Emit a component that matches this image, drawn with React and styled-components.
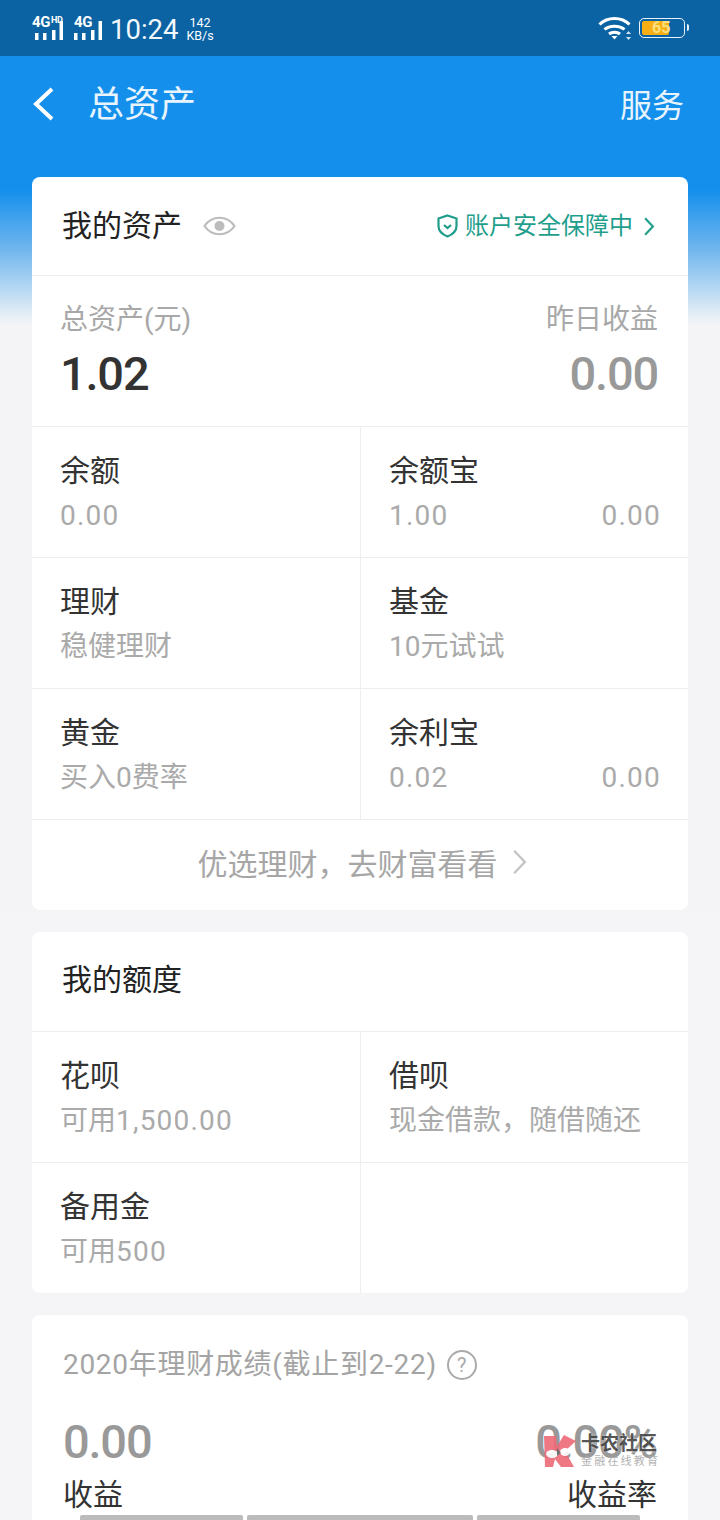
import React from "react";
import styled, { createGlobalStyle } from "styled-components";

const GlobalStyle = createGlobalStyle`
  html, body {
    margin: 0;
    padding: 0;
    background: #f5f5f8;
  }
  * {
    box-sizing: border-box;
  }
`;

const Page = styled.div`
  position: relative;
  width: 720px;
  height: 1520px;
  overflow: hidden;
  font-family: "Roboto", "Noto Sans CJK SC", sans-serif;
  background: linear-gradient(
    #1490ec 0,
    #1490ec 190px,
    #72b6ee 250px,
    #b8d9f3 290px,
    #e4eef6 315px,
    #f4f4f6 326px,
    #f5f5f8 100%
  );
`;

const StatusBar = styled.div`
  height: 56px;
  background: #0b63a3;
  color: #fff;
  display: flex;
  align-items: center;
  justify-content: space-between;
  padding: 0 32px;
`;

const StatusGroup = styled.div`
  display: flex;
  align-items: center;
`;

const SignalWrap = styled.div`
  width: ${(p) => p.$w}px;
  height: 24px;
  margin-right: ${(p) => p.$mr}px;
  margin-top: -1px;
`;

const SignalText = styled.div`
  font-size: 15px;
  line-height: 12px;
  font-weight: 700;
  white-space: nowrap;
  letter-spacing: -0.4px;

  sup {
    font-size: 9px;
    line-height: 8px;
    vertical-align: 4px;
    margin-left: 1px;
  }
`;

const SignalBars = styled.svg`
  display: block;
  margin-top: -7px;
`;

const Clock = styled.div`
  font-size: 27.5px;
  line-height: 30px;
  margin-right: 8px;
  margin-top: 3px;
  color: #f2f8fc;
`;

const Speed = styled.div`
  font-size: 12.5px;
  line-height: 13px;
  margin-top: 2px;
  text-align: center;
`;

const Battery = styled.div`
  position: relative;
  width: 46px;
  height: 20px;
  margin-left: 8px;
  margin-right: 3px;
  border: 1.5px solid #e8f2fa;
  border-radius: 5px;
  padding: 2px;

  &::after {
    content: "";
    position: absolute;
    right: -5px;
    top: 5px;
    width: 2px;
    height: 7px;
    background: #e8f2fa;
    border-radius: 0 2px 2px 0;
  }
`;

const BatteryFill = styled.div`
  width: 27px;
  height: 100%;
  background: #f9ae14;
  border-radius: 2px;
`;

const BatteryText = styled.span`
  position: absolute;
  left: 12px;
  top: 0;
  font-size: 16px;
  line-height: 17px;
  font-weight: 700;
  color: #f8e07e;
`;

const NavBar = styled.div`
  height: 121px;
  padding: 26px 36px 0 32px;
  display: flex;
  align-items: flex-start;
  color: #e8f4fd;
`;

const BackIcon = styled.svg`
  width: 24px;
  height: 34px;
  margin-top: 5px;
  margin-right: 32px;
`;

const NavTitle = styled.div`
  flex: 1;
  font-size: 36px;
  line-height: 46px;
`;

const NavAction = styled.div`
  font-size: 32px;
  line-height: 50px;
  margin-top: -1px;
`;

const Cards = styled.div`
  display: flex;
  flex-direction: column;
  gap: 22px;
  padding: 0 32px;
`;

const Card = styled.div`
  background: #fff;
  border-radius: 8px;
`;

const CardHead = styled.div`
  height: ${(p) => p.$h}px;
  padding: 0 33px ${(p) => p.$pb || 0}px 30px;
  display: flex;
  align-items: center;
  border-bottom: 1px solid #eeeeee;
`;

const CardTitle = styled.div`
  font-size: 30px;
  line-height: 40px;
  color: #222;
  margin-right: 21px;
`;

const SafeLink = styled.div`
  margin-left: auto;
  display: flex;
  align-items: center;
  color: #1f9e8c;
  font-size: 24px;
  line-height: 32px;
`;

const SafeIcon = styled.svg`
  width: 21px;
  height: 24px;
  margin-right: 7px;
`;

const Chevron = styled.svg`
  width: ${(p) => p.$w}px;
  height: ${(p) => p.$h}px;
  margin-left: ${(p) => p.$ml}px;
`;

const TotalRow = styled.div`
  height: 151px;
  padding: 26px 30px 0 28px;
  display: flex;
  justify-content: space-between;
  border-bottom: 1px solid #eeeeee;
`;

const TotalCol = styled.div`
  display: flex;
  flex-direction: column;
  align-items: ${(p) => (p.$right ? "flex-end" : "flex-start")};
`;

const MutedLabel = styled.div`
  font-size: 28px;
  line-height: 36px;
  color: #a8a8a8;
`;

const BigValue = styled.div`
  font-size: 47px;
  line-height: 60px;
  margin-top: 6px;
  font-weight: 500;
  letter-spacing: -1.2px;
  color: ${(p) => (p.$muted ? "#999999" : "#333333")};
`;

const Grid = styled.div`
  display: grid;
  grid-template-columns: 329px 327px;
  grid-auto-rows: 131px;
`;

const QuotaGrid = styled(Grid)`
  grid-template-rows: 131px 130px;
`;

const Cell = styled.div`
  padding: 24px 27px 0 28px;
  border-right: ${(p) => (p.$left ? "1px solid #eeeeee" : "none")};
  border-bottom: ${(p) => (p.$last ? "none" : "1px solid #eeeeee")};
`;

const CellTitle = styled.div`
  font-size: 30px;
  line-height: 40px;
  color: #333;
`;

const CellSub = styled.div`
  display: flex;
  justify-content: space-between;
  margin-top: 5px;
  font-size: 28px;
  line-height: 40px;
  color: #aaaaaa;
  white-space: nowrap;
`;

const Digits = styled.span`
  letter-spacing: 1.2px;
`;

const MoreLink = styled.div`
  height: 90px;
  padding: 0 0 6px 4px;
  display: flex;
  align-items: center;
  justify-content: center;
  font-size: 30px;
  color: #a6a6a6;
`;

const ScoreCard = styled(Card)`
  height: 260px;
  padding: 29px 31px 0 31px;
`;

const ScoreTitle = styled.div`
  display: flex;
  align-items: center;
  font-size: 28px;
  line-height: 42px;
  letter-spacing: 0.7px;
  color: #a4a4a4;
`;

const HelpIcon = styled.span`
  width: 30px;
  height: 30px;
  margin-left: 10px;
  border: 2px solid #aaaaaa;
  border-radius: 50%;
  font-size: 20px;
  line-height: 26px;
  text-align: center;
  letter-spacing: 0;
  color: #aaaaaa;
`;

const ScoreRow = styled.div`
  display: flex;
  justify-content: space-between;
  margin-top: 28px;
`;

const ScoreValue = styled.div`
  font-size: 47px;
  line-height: 56px;
  font-weight: 500;
  letter-spacing: -1.2px;
  color: #999999;
`;

const ScoreLabel = styled.div`
  font-size: 30px;
  line-height: 42px;
  color: #333;
  margin-top: 4px;
  text-align: ${(p) => (p.$right ? "right" : "left")};
`;

const Watermark = styled.div`
  position: absolute;
  left: 543px;
  top: 1433px;
  display: flex;
  align-items: center;
  opacity: 0.9;
`;

const WatermarkLogo = styled.svg`
  width: 34px;
  height: 34px;
  margin-right: 4px;
`;

const WatermarkTitle = styled.div`
  font-size: 19px;
  line-height: 22px;
  font-weight: 700;
  color: #444;
  text-shadow: 0 0 2px #fff;
  white-space: nowrap;
`;

const WatermarkSub = styled.div`
  font-size: 11px;
  line-height: 13px;
  letter-spacing: 2.2px;
  color: #aaa;
  white-space: nowrap;
`;

const GestureBar = styled.div`
  position: absolute;
  left: 80px;
  bottom: 0;
  display: flex;
  gap: 4px;
`;

const GesturePiece = styled.div`
  width: ${(p) => p.$w}px;
  height: 5px;
  background: #bbbbbb;
  border-radius: 2px 2px 0 0;
`;

function Signal({ label, hd, width, mr, bars }) {
  return (
    <SignalWrap $w={width} $mr={mr}>
      <SignalText>
        {label}
        {hd && <sup>HD</sup>}
      </SignalText>
      <SignalBars width={width} height="19" viewBox={`0 0 ${width} 19`} fill="#fff">
        <rect x={bars} y="12" width="3.5" height="7" />
        <rect x={bars + 8} y="12" width="3.5" height="7" />
        <rect x={bars + 17} y="9" width="3.5" height="10" />
        <rect x={bars + 24.5} y="0" width="3.5" height="19" />
      </SignalBars>
    </SignalWrap>
  );
}

function Arrow({ color, width = 2.5, w, h, ml }) {
  return (
    <Chevron $w={w} $h={h} $ml={ml} viewBox="0 0 12 22" fill="none">
      <path d="M1.5 1.5 L10.5 11 L1.5 20.5" stroke={color} strokeWidth={width} />
    </Chevron>
  );
}

export default function App() {
  return (
    <Page>
      <GlobalStyle />
      <StatusBar>
        <StatusGroup>
          <Signal label="4G" hd width={42} mr={0} bars={3} />
          <Signal label="4G" width={29} mr={7} bars={0} />
          <Clock>10:24</Clock>
          <Speed>
            142
            <br />
            KB/s
          </Speed>
        </StatusGroup>
        <StatusGroup>
          <svg width="33" height="23" viewBox="0 0 33 23" fill="none" stroke="#fff" strokeWidth="3">
            <path d="M1.5 7.5 C9.5 -0.5 23.5 -0.5 31.5 7.5" />
            <path d="M6.5 12.5 C11.5 8 21.5 8 26.5 12.5" />
            <path d="M11 17 C14 14.5 19 14.5 22 17" />
            <path d="M13.5 19 L16.5 22.5 L19.5 19 Z" fill="#fff" stroke="none" />
            <path d="M30.5 14 L33 17 L28 17 Z M30.5 23 L33 20 L28 20 Z" fill="#cfe3f2" stroke="none" />
          </svg>
          <Battery>
            <BatteryFill />
            <BatteryText>65</BatteryText>
          </Battery>
        </StatusGroup>
      </StatusBar>

      <NavBar>
        <BackIcon viewBox="0 0 24 34" fill="none">
          <path d="M20 2 L4 17 L20 32" stroke="#fff" strokeWidth="4" />
        </BackIcon>
        <NavTitle>总资产</NavTitle>
        <NavAction>服务</NavAction>
      </NavBar>

      <Cards>
        <Card>
          <CardHead $h={99}>
            <CardTitle>我的资产</CardTitle>
            <svg width="33" height="22" viewBox="0 0 33 22" fill="none">
              <path d="M1.5 11 C9 0 24 0 31.5 11 C24 22 9 22 1.5 11 Z" stroke="#bcbcbc" strokeWidth="2.2" />
              <circle cx="16.5" cy="11" r="5" fill="#bcbcbc" />
            </svg>
            <SafeLink>
              <SafeIcon viewBox="0 0 21 24" fill="none" stroke="#1f9e8c" strokeWidth="2.2">
                <path d="M10.5 1.5 L19.5 4.5 V12 C19.5 17 15.5 20.5 10.5 22.5 C5.5 20.5 1.5 17 1.5 12 V4.5 Z" />
                <path d="M7 11 L10.5 14 L14 11" />
              </SafeIcon>
              账户安全保障中
              <Arrow color="#1f9e8c" w={12} h={19} ml={10} />
            </SafeLink>
          </CardHead>
          <TotalRow>
            <TotalCol>
              <MutedLabel>总资产(元)</MutedLabel>
              <BigValue>1.02</BigValue>
            </TotalCol>
            <TotalCol $right>
              <MutedLabel>昨日收益</MutedLabel>
              <BigValue $muted>0.00</BigValue>
            </TotalCol>
          </TotalRow>
          <Grid>
            <Cell $left>
              <CellTitle>余额</CellTitle>
              <CellSub>
                <Digits>0.00</Digits>
              </CellSub>
            </Cell>
            <Cell>
              <CellTitle>余额宝</CellTitle>
              <CellSub>
                <Digits>1.00</Digits>
                <Digits>0.00</Digits>
              </CellSub>
            </Cell>
            <Cell $left>
              <CellTitle>理财</CellTitle>
              <CellSub>稳健理财</CellSub>
            </Cell>
            <Cell>
              <CellTitle>基金</CellTitle>
              <CellSub>10元试试</CellSub>
            </Cell>
            <Cell $left>
              <CellTitle>黄金</CellTitle>
              <CellSub>买入0费率</CellSub>
            </Cell>
            <Cell>
              <CellTitle>余利宝</CellTitle>
              <CellSub>
                <Digits>0.02</Digits>
                <Digits>0.00</Digits>
              </CellSub>
            </Cell>
          </Grid>
          <MoreLink>
            优选理财，去财富看看
            <Arrow color="#c4c4c4" width={2} w={15} h={26} ml={14} />
          </MoreLink>
        </Card>

        <Card>
          <CardHead $h={100} $pb={3}>
            <CardTitle>我的额度</CardTitle>
          </CardHead>
          <QuotaGrid>
            <Cell $left>
              <CellTitle>花呗</CellTitle>
              <CellSub>
                <span>
                  可用<Digits>1,500.00</Digits>
                </span>
              </CellSub>
            </Cell>
            <Cell>
              <CellTitle>借呗</CellTitle>
              <CellSub>现金借款，随借随还</CellSub>
            </Cell>
            <Cell $left $last>
              <CellTitle>备用金</CellTitle>
              <CellSub>
                <span>
                  可用<Digits>500</Digits>
                </span>
              </CellSub>
            </Cell>
            <Cell $last />
          </QuotaGrid>
        </Card>

        <ScoreCard>
          <ScoreTitle>
            2020年理财成绩(截止到2-22)
            <HelpIcon>?</HelpIcon>
          </ScoreTitle>
          <ScoreRow>
            <div>
              <ScoreValue>0.00</ScoreValue>
              <ScoreLabel>收益</ScoreLabel>
            </div>
            <div>
              <ScoreValue>0.00%</ScoreValue>
              <ScoreLabel $right>收益率</ScoreLabel>
            </div>
          </ScoreRow>
        </ScoreCard>
      </Cards>

      <Watermark>
        <WatermarkLogo viewBox="0 0 34 34">
          <path d="M1 2 H13 L14 12 L21 1 L33 7 L22 17 L31 33 H18 L12 25 L10 33 H2 Z" fill="#ee6a78" />
          <ellipse cx="9" cy="20" rx="6" ry="4" fill="#fff" />
          <ellipse cx="22" cy="18" rx="5" ry="4" fill="#fff" />
          <path d="M14 14 L18 19 L14 22 Z" fill="#666" />
        </WatermarkLogo>
        <div>
          <WatermarkTitle>卡农社区</WatermarkTitle>
          <WatermarkSub>金融在线教育</WatermarkSub>
        </div>
      </Watermark>

      <GestureBar>
        <GesturePiece $w={163} />
        <GesturePiece $w={226} />
        <GesturePiece $w={163} />
      </GestureBar>
    </Page>
  );
}
